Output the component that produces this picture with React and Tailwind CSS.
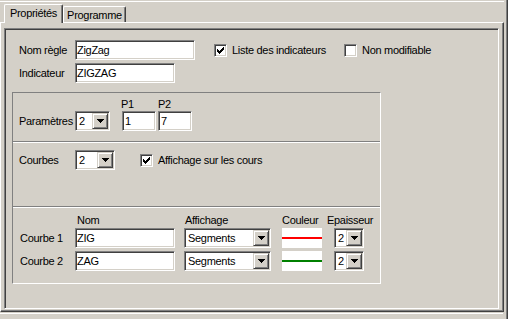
import React from 'react';

const sunken =
  'border border-t-[#808080] border-l-[#808080] border-b-white border-r-white p-px shadow-[inset_1px_1px_0_#404040,inset_-1px_-1px_0_#d4d0c8]';

const TextBox = ({ className = '', value }) => (
  <div className={`${sunken} ${className} h-[20px] bg-white flex items-center shrink-0`}>
    <span className="whitespace-nowrap">{value}</span>
  </div>
);

const Arrow = () => (
  <svg width="7" height="4" viewBox="0 0 7 4" shapeRendering="crispEdges">
    <rect x="0" y="0" width="7" height="1" fill="#000" />
    <rect x="1" y="1" width="5" height="1" fill="#000" />
    <rect x="2" y="2" width="3" height="1" fill="#000" />
    <rect x="3" y="3" width="1" height="1" fill="#000" />
  </svg>
);

const Combo = ({ className = '', value }) => (
  <div className={`${sunken} ${className} h-[20px] bg-white flex shrink-0`}>
    <span className="flex-1 pl-[2px] flex items-center whitespace-nowrap overflow-hidden">{value}</span>
    <div className="w-[16px] h-full shrink-0 bg-[#d4d0c8] border border-t-[#d4d0c8] border-l-[#d4d0c8] border-b-[#404040] border-r-[#404040] shadow-[inset_1px_1px_0_#fff,inset_-1px_-1px_0_#808080] flex items-center justify-center">
      <Arrow />
    </div>
  </div>
);

// classic 7x7 check mark, pixel by pixel
const checkPixels = [
  [6, 0], [5, 1], [6, 1], [0, 2], [4, 2], [5, 2], [6, 2],
  [0, 3], [1, 3], [3, 3], [4, 3], [5, 3], [0, 4], [1, 4], [2, 4], [3, 4], [4, 4],
  [1, 5], [2, 5], [3, 5], [2, 6],
];

const CheckBox = ({ checked, className = '' }) => (
  <div className={`${sunken} ${className} w-[13px] h-[13px] bg-white flex items-center justify-center shrink-0`}>
    {checked && (
      <svg width="7" height="7" viewBox="0 0 7 7" shapeRendering="crispEdges">
        {checkPixels.map(([x, y]) => (
          <rect key={`${x}-${y}`} x={x} y={y} width="1" height="1" fill="#000" />
        ))}
      </svg>
    )}
  </div>
);

const ColorBox = ({ color, className = '' }) => (
  <div className={`${className} w-[40px] h-[20px] bg-white flex items-center shrink-0`}>
    <div className="w-full h-[2px]" style={{ backgroundColor: color }} />
  </div>
);

const curves = [
  { label: 'Courbe 1', name: 'ZIG', color: '#ff0000' },
  { label: 'Courbe 2', name: 'ZAG', color: '#008000' },
];

export default function App() {
  return (
    <div className="w-[508px] h-[319px] bg-[#d4d0c8] overflow-hidden flex font-['Liberation_Sans',Arial,sans-serif] text-[11px] leading-[13px] tracking-[-0.3px] text-black">
      <div className="w-[504px] flex flex-col shrink-0">
        <div className="h-[2px] border-b border-white" />

        {/* Tabs */}
        <div className="h-[20px] flex items-end">
          <div className="relative z-10 ml-[4px] w-[59px] h-[19px] -mb-px bg-[#d4d0c8] border-l border-t border-r border-l-white border-t-white border-r-[#404040] shadow-[inset_-1px_0_0_#808080] rounded-t-[2px] flex justify-center pt-[2px]">
            Propriétés
          </div>
          <div className="w-[63px] h-[16px] border-l border-t border-r border-l-white border-t-white border-r-[#404040] shadow-[inset_-1px_0_0_#808080] rounded-t-[2px] flex justify-center pt-[2px]">
            Programme
          </div>
        </div>

        {/* Tab page */}
        <div className="h-[290px] border border-t-white border-l-white border-r-[#404040] border-b-[#404040] shadow-[inset_-1px_-1px_0_#808080]">
          <div className="ml-[3px] mt-[5px] w-[495px] h-[281px] border border-t-[#808080] border-l-[#808080] border-b-white border-r-white shadow-[inset_1px_1px_0_#404040] flex flex-col">
            <div className="mt-[11px] h-[20px] flex items-center pl-[14px]">
              <span className="w-[56px] shrink-0">Nom règle</span>
              <TextBox className="w-[120px]" value="ZigZag" />
              <CheckBox checked className="ml-[19px]" />
              <span className="ml-[5px] w-[112px] shrink-0">Liste des indicateurs</span>
              <CheckBox />
              <span className="ml-[5px]">Non modifiable</span>
            </div>
            <div className="mt-[3px] h-[20px] flex items-center pl-[14px]">
              <span className="w-[56px] shrink-0">Indicateur</span>
              <TextBox className="w-[100px]" value="ZIGZAG" />
            </div>

            {/* Settings box */}
            <div className="mt-[9px] ml-[7px] w-[369px] h-[192px] border border-t-[#808080] border-l-[#808080] border-b-white border-r-white flex flex-col">
              <div className="h-[49px] border-b border-[#808080] flex flex-col">
                <div className="mt-[5px] h-[13px] flex pl-[108px]">
                  <span className="w-[37px]">P1</span>
                  <span>P2</span>
                </div>
                <div className="h-[20px] flex items-center pl-[6px]">
                  <span className="w-[56px] shrink-0 whitespace-nowrap">Paramètres</span>
                  <Combo className="w-[35px]" value="2" />
                  <TextBox className="ml-[12px] w-[34px] pl-[2px]" value="1" />
                  <TextBox className="ml-[2px] w-[34px] pl-[2px]" value="7" />
                </div>
              </div>

              <div className="h-[65px] border-t border-t-white border-b border-b-[#808080]">
                <div className="mt-[7px] h-[20px] flex items-center pl-[6px]">
                  <span className="w-[56px] shrink-0">Courbes</span>
                  <Combo className="w-[40px]" value="2" />
                  <CheckBox checked className="ml-[25px]" />
                  <span className="ml-[5px]">Affichage sur les cours</span>
                </div>
              </div>

              <div className="flex-1 border-t border-white flex flex-col">
                <div className="mt-[6px] h-[13px] flex pl-[64px]">
                  <span className="w-[108px]">Nom</span>
                  <span className="w-[97px]">Affichage</span>
                  <span className="w-[45px]">Couleur</span>
                  <span>Epaisseur</span>
                </div>
                {curves.map((c, i) => (
                  <div key={c.label} className={`${i === 0 ? 'mt-px' : 'mt-[3px]'} h-[20px] flex items-center pl-[7px]`}>
                    <span className="w-[55px] shrink-0">{c.label}</span>
                    <TextBox className="w-[100px]" value={c.name} />
                    <Combo className="ml-[9px] w-[87px]" value="Segments" />
                    <ColorBox className="ml-[11px]" color={c.color} />
                    <Combo className="ml-[12px] w-[30px]" value="2" />
                  </div>
                ))}
              </div>
            </div>
          </div>
        </div>

        <div className="h-[7px] pt-px">
          <div className="w-[503px] border-t border-white" />
        </div>
      </div>

      {/* right edge of the parent frame */}
      <div className="w-[4px] flex">
        <div className="w-[2px]" />
        <div className="w-px bg-[#808080]" />
        <div className="w-px bg-[#404040]" />
      </div>
    </div>
  );
}
